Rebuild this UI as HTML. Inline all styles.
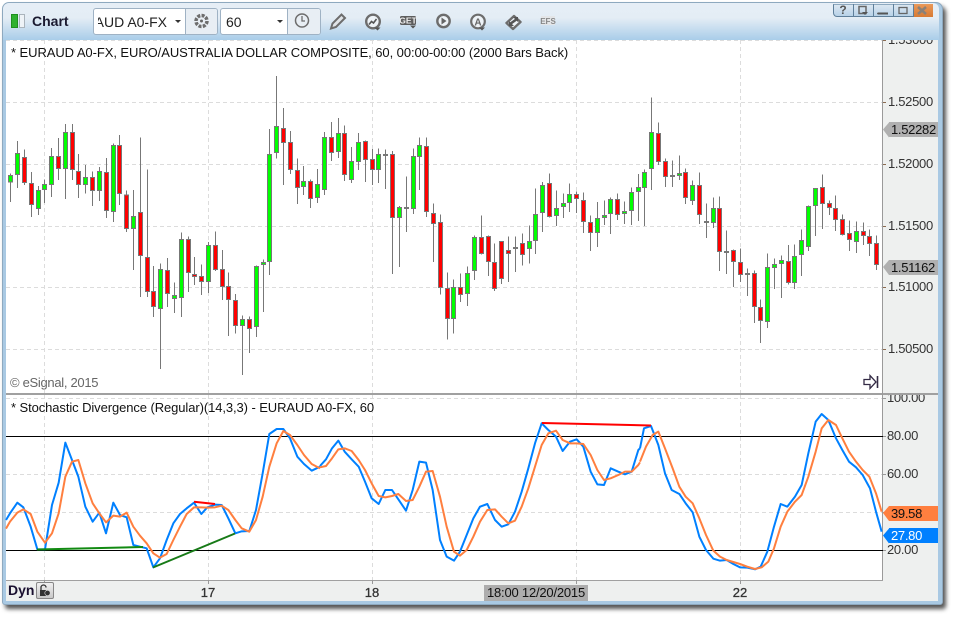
<!DOCTYPE html>
<html>
<head>
<meta charset="utf-8">
<style>
html,body{margin:0;padding:0;background:#fff}
body{width:957px;height:619px;overflow:hidden;position:relative;font-family:"Liberation Sans",sans-serif;font-size:13px;color:#111}
#win{position:absolute;left:2px;top:2px;width:939px;height:601px;border:1px solid #8ea9bf;border-radius:7px 7px 3px 3px;background:#a9c9e3;box-shadow:3px 4px 4px #555}
#bar{position:absolute;left:3px;top:3px;width:936px;height:37px;border-radius:6px 6px 0 0;background:linear-gradient(#e6eef6 0,#e4edf5 40%,#a9cde9 100%)}
#main{position:absolute;left:6px;top:40px;width:876px;height:540px;background:#fff}
#axis{position:absolute;left:883px;top:40px;width:55px;height:561px;background:#eef0ef}
#bot{position:absolute;left:6px;top:581px;width:877px;height:20px;background:#eef0ef}
.t{position:absolute;white-space:nowrap;line-height:14px}
.p{left:888px;color:#333;letter-spacing:-.3px}
.q{left:887px;color:#333;letter-spacing:-.3px}
.d{color:#333;top:586px;width:30px;text-align:center;-webkit-text-stroke:.3px #333}
.tag{position:absolute;left:889px;width:49px;height:15px;line-height:15px}
.tag span{position:absolute;left:2px;top:0;letter-spacing:-.3px}
.combo{position:absolute;top:8px;height:25px;background:#fff;border:1px solid #9fb2c4;border-radius:3px;overflow:hidden}
.combo .b{position:absolute;top:0;height:25px;background:#e8eef4;border-left:1px solid #9fb2c4}
.btn{position:absolute;top:4px;height:13px;width:19px;border-left:1px solid #5f7f9a;text-align:center;line-height:13px;font-weight:bold;font-size:12px;color:#555}
</style>
</head>
<body>
<div id="win"></div>
<div id="bar"></div>
<div id="main"></div>
<div id="axis"></div>
<div id="bot"></div>

<!-- toolbar left -->
<div style="position:absolute;left:11px;top:14px;width:5px;height:12px;background:#2fb12f;border:1px solid #1f8f1f"></div>
<div style="position:absolute;left:19px;top:14px;width:4px;height:12px;background:#eef3f7;border:1px solid #aab4bc"></div>
<div class="t" style="left:32px;top:14px;font-weight:bold;font-size:14px;color:#1a1a30">Chart</div>

<div class="combo" style="left:93px;width:123px">
  <div style="position:absolute;left:4px;top:0;width:71px;height:25px;overflow:hidden"><div style="position:absolute;right:2px;top:5px;font-size:14px;line-height:16px;color:#222;white-space:nowrap">EURAUD A0-FX</div></div>
  <div style="position:absolute;left:81px;top:11px;width:0;height:0;border:3px solid transparent;border-top:3px solid #333"></div>
  <div class="b" style="left:91px;width:31px"></div>
</div>
<div class="combo" style="left:220px;width:99px">
  <div style="position:absolute;left:5px;top:5px;font-size:14px;line-height:16px;color:#222">60</div>
  <div style="position:absolute;left:56px;top:11px;width:0;height:0;border:3px solid transparent;border-top:3px solid #333"></div>
  <div class="b" style="left:66px;width:32px"></div>
</div>

<!-- window buttons -->
<div style="position:absolute;left:833px;top:4px;width:100px;height:13px;border:1px solid #5f7f9a;border-top-color:#8ea9bf;border-radius:0 0 4px 4px;background:linear-gradient(#dbe7f1,#b8d2e8);overflow:hidden;box-sizing:border-box"></div>
<div class="btn" style="left:833px;border-left:0;width:20px;">?</div>
<div class="btn" style="left:853px"></div>
<div class="btn" style="left:873px"></div>
<div class="btn" style="left:893px"></div>
<div class="btn" style="left:913px;width:19px;background:linear-gradient(#e9995a,#d87a33)"></div>

<svg width="957" height="619" style="position:absolute;left:0;top:0" xmlns="http://www.w3.org/2000/svg">
  <!-- window button glyphs -->
  <path d="M860 7.500h7v7h-7zM882 14.500h-4" fill="none" stroke="#666" stroke-width="1.500" transform="translate(-1 -1)"/>
  <path d="M862 12l6 0-3 3z" fill="#555"/>
  <path d="M878 13.500h10" stroke="#555" stroke-width="2"/>
  <rect x="899" y="7.500" width="8" height="6" fill="none" stroke="#666" stroke-width="1.300"/>
  <path d="M918 7l8 7M926 7l-8 7" stroke="#8a8078" stroke-width="2.500"/>

  <!-- toolbar icons -->
  <g fill="none" stroke="#6d6d6d">
    <!-- gear -->
    <circle cx="201.500" cy="21" r="5.500" stroke-width="3.500" stroke-dasharray="3 1.300"/>
    <circle cx="201.500" cy="21" r="1.500" fill="#666" stroke="none"/>
    <!-- clock -->
    <circle cx="302" cy="20.500" r="6.500" stroke-width="1.500"/>
    <path d="M302 16v5h3" stroke-width="1.300"/>
    <!-- pencil -->
    <path d="M331 28.500l1.500-5 9-9 3.500 3.500-9 9z" fill="#e0e4e8" stroke-width="2"/>
    <!-- chart -->
    <circle cx="373" cy="21.500" r="6.800" fill="#eef3f7" stroke-width="2.400"/>
    <path d="M369 24.500l2.500-3 2 1.500 3-4" stroke="#555" stroke-width="1.600"/>
    <!-- play -->
    <circle cx="443.500" cy="21" r="6.200" fill="#eef3f7" stroke-width="2.400"/>
    <!-- A -->
    <circle cx="478" cy="21.500" r="6.800" fill="#eef3f7" stroke-width="2.200"/>
    <!-- diamond -->
    <path d="M506.500 23l7.500-7 6.500 6-7.500 7z" fill="#eef3f7" stroke-width="2.400" stroke-linejoin="round"/>
    <path d="M510 24l7-5" stroke="#555" stroke-width="2.600"/>
  </g>
  <path d="M441.500 17.500l5 3.500-5 3.500z" fill="#666"/>
  <path d="M513 17h5v5zM514 26h-5v-5z" fill="#555"/>
  <path d="M374.500 27.500h6l-3 3zM479 27.500h6l-3 3zM410 25.500h6l-3 3z" fill="#555"/>
  <rect x="400" y="16" width="16" height="9" rx="1.500" fill="#5d5d5d"/>
  <text x="408" y="23.500" font-family="Liberation Sans" font-size="8.500" font-weight="bold" fill="#eee" text-anchor="middle">GET</text>
  <text x="478" y="25.500" font-family="Liberation Sans" font-size="10" font-weight="bold" fill="#666" text-anchor="middle">A</text>
  <rect x="541" y="16" width="14" height="9" fill="#e4e6e8"/>
  <text x="548" y="24" font-family="Liberation Sans" font-size="8" font-weight="bold" fill="#888" text-anchor="middle">EFS</text>

  <!-- grid -->
  <g stroke="#dcdcdc" stroke-width="1" stroke-dasharray="4 3" shape-rendering="crispEdges" fill="none">
    <path d="M6 40.500H882M6 102.500H882M6 164.500H882M6 226.500H882M6 287.500H882M6 349.500H882"/>
    <path d="M44.500 40V393M208.500 40V393M372.500 40V393M576.500 40V393M740.500 40V393"/>
    <path d="M6 398.500H882M6 474.500H882M6 512.500H882"/>
    <path d="M44.500 395V580M208.500 395V580M372.500 395V580M576.500 395V580M740.500 395V580"/>
  </g>

  <!-- candles A -->
  <g transform="translate(.17 120.170) scale(.33333)" shape-rendering="crispEdges">
    <path fill="none" stroke="#777" stroke-width="3" d="M31 160V245M52 63V204M73 88V195M94 156V290M115 198V284M133 178V249M154 84V231M175 54V180M196 12V236M217 12V180M235 102V234M256 135V220M277 154V258M298 141V243M319 114V294M340 70V305M358 45V255M379 211V336M400 210V450M421 52V530M442 148V530M460 438V590M481 430V746M502 414V560M523 487V578M544 337V590M565 349V515M583 411V495M604 433V524M625 365V518M646 334V452M667 390V540M685 457V647M706 522V640M727 586V764M748 589V698M769 436V650M790 418V575M808 27V464M829 -132V115M850 -36V194"/>
    <path fill="#00ff00" stroke="#777" stroke-width="3" d="M25 166h12V185h-12zM46 100h12V163h-12zM109 211h12V265h-12zM127 193h12V208h-12zM148 109h12V193h-12zM190 37h12V145h-12zM250 172h12V193h-12zM292 154h12V211h-12zM334 76h12V274h-12zM394 289h12V325h-12zM475 448h12V565h-12zM517 526h12V535h-12zM538 358h12V532h-12zM619 376h12V484h-12zM721 598h12V616h-12zM763 439h12V619h-12zM784 427h12V433h-12zM802 103h12V424h-12zM823 19h12V97h-12z"/>
    <path fill="#ff0000" stroke="#777" stroke-width="3" d="M67 112h12V187h-12zM88 190h12V253h-12zM169 109h12V145h-12zM211 37h12V148h-12zM229 154h12V193h-12zM271 172h12V211h-12zM313 157h12V271h-12zM352 76h12V220h-12zM373 224h12V325h-12zM415 277h12V406h-12zM436 412h12V514h-12zM454 514h12V559h-12zM496 451h12V520h-12zM559 358h12V457h-12zM577 463h12V469h-12zM598 469h12V484h-12zM640 376h12V448h-12zM661 448h12V499h-12zM679 499h12V538h-12zM700 541h12V616h-12zM742 598h12V625h-12zM844 25h12V67h-12z"/>
  </g>
  <!-- candles B -->
  <g transform="translate(290.170 70.170) scale(.33333)" shape-rendering="crispEdges">
    <path fill="none" stroke="#777" stroke-width="3" d="M1 183V311M22 265V401M40 288V374M61 328V413M82 297V398M103 186V374M124 156V272M145 144V264M163 166V332M184 231V338M205 189V299M226 211V335M247 237V344M265 235V338M286 238V356M307 243V611M328 408V590M349 319V485M370 235V431M388 202V360M409 202V440M430 400V575M451 433V673M472 607V808M490 628V790M511 610V695M532 589V707M553 496V630M574 436V553M595 496V617M613 520V662M634 514V641M655 499V635M676 499V605M697 490V586M718 466V580M736 355V551M757 335V485M778 310V442M799 361V467M820 370V443M838 340V425M859 364V428M880 367V488"/>
    <path fill="#00ff00" stroke="#777" stroke-width="3" d="M34 334h12V349h-12zM76 343h12V382h-12zM97 202h12V358h-12zM139 190h12V244h-12zM178 274h12V328h-12zM199 217h12V274h-12zM259 253h12V298h-12zM322 412h12V442h-12zM364 259h12V415h-12zM382 226h12V259h-12zM484 652h12V745h-12zM526 610h12V670h-12zM547 502h12V601h-12zM712 514h12V535h-12zM730 433h12V511h-12zM751 346h12V427h-12zM793 415h12V436h-12zM814 400h12V409h-12zM832 373h12V397h-12zM280 253h12V256h-12zM343 412h12V415h-12zM670 532h12V535h-12z"/>
    <path fill="#ff0000" stroke="#777" stroke-width="3" d="M-5 217h12V298h-12zM16 301h12V352h-12zM55 334h12V385h-12zM118 202h12V247h-12zM157 190h12V313h-12zM220 214h12V268h-12zM241 268h12V298h-12zM301 253h12V442h-12zM403 229h12V424h-12zM424 430h12V460h-12zM445 457h12V652h-12zM466 655h12V745h-12zM505 652h12V673h-12zM568 502h12V550h-12zM589 499h12V574h-12zM607 577h12V655h-12zM628 514h12V625h-12zM649 541h12V550h-12zM691 520h12V553h-12zM772 340h12V439h-12zM853 373h12V385h-12zM874 391h12V454h-12z"/>
  </g>
  <!-- candles C -->
  <g transform="translate(590.170 90.170) scale(.33333)" shape-rendering="crispEdges">
    <path fill="none" stroke="#777" stroke-width="3" d="M1 376V482M22 336V470M43 331V404M61 322V431M82 310V389M103 334V401M124 292V404M145 252V392M163 238V408M184 22V299M205 97V224M226 205V290M247 211V290M268 196V269M286 235V341M307 271V344M328 247V401M349 340V443M370 322V413M388 319V542M409 421V551M430 478V590M451 475V575M472 535V617M493 541V698M511 628V758M532 490V713M553 505V596M574 496V623M595 465V583M613 463V596M634 418V557M655 346V482M676 295V437M697 253V416M718 331V374M736 316V422M757 373V436M778 391V482M799 394V488M820 397V464M838 418V497M859 436V539"/>
    <path fill="#00ff00" stroke="#777" stroke-width="3" d="M16 385h12V427h-12zM37 376h12V382h-12zM55 328h12V370h-12zM97 364h12V370h-12zM118 307h12V361h-12zM139 292h12V304h-12zM157 247h12V292h-12zM178 127h12V235h-12zM262 250h12V256h-12zM301 286h12V331h-12zM364 355h12V397h-12zM526 532h12V694h-12zM547 523h12V532h-12zM568 511h12V520h-12zM607 499h12V577h-12zM628 451h12V493h-12zM649 349h12V469h-12zM670 295h12V346h-12zM793 424h12V454h-12zM241 256h12V259h-12zM343 394h12V397h-12zM403 484h12V487h-12zM466 550h12V553h-12z"/>
    <path fill="#ff0000" stroke="#777" stroke-width="3" d="M-5 397h12V427h-12zM76 328h12V373h-12zM199 130h12V214h-12zM220 214h12V259h-12zM280 247h12V322h-12zM322 286h12V373h-12zM382 355h12V484h-12zM424 481h12V514h-12zM445 517h12V553h-12zM487 550h12V649h-12zM505 652h12V691h-12zM589 514h12V577h-12zM691 292h12V340h-12zM712 340h12V352h-12zM730 355h12V388h-12zM751 388h12V433h-12zM772 430h12V448h-12zM814 424h12V436h-12zM832 439h12V460h-12zM853 460h12V523h-12z"/>
  </g>

  <!-- separators & axes -->
  <g shape-rendering="crispEdges">
    <rect x="6" y="393" width="932" height="2" fill="#a0a0a0"/>
    <rect x="882" y="40" width="1" height="541" fill="#9a9a9a"/>
    <rect x="6" y="580" width="877" height="1" fill="#a0a0a0"/>
    <path d="M6 436.500H883M6 550.500H883" stroke="#000" stroke-width="1"/>
    <path d="M44.500 580v4M208.500 580v4M372.500 580v4M576.500 580v4M740.500 580v4" stroke="#999"/>
    <path d="M883 40.500h3M883 102.500h3M883 164.500h3M883 226.500h3M883 287.500h3M883 349.500h3" stroke="#8a6a50"/>
    <path d="M883 398.500h3M883 436.500h3M883 474.500h3M883 512.500h3M883 550.500h3" stroke="#999"/>
  </g>

  <!-- exit arrow -->
  <path d="M864 379.500h6v-4l6 6.500-6 6.500v-4h-6z" fill="#fff" stroke="#332a44" stroke-width="1.300"/>
  <path d="M877.500 376v12" stroke="#332a44" stroke-width="1.600" fill="none"/>

  <!-- stochastic lines -->
  <g fill="none" stroke-width="6" stroke-linejoin="round">
    <g transform="translate(0 370) scale(.33333)">
      <polyline stroke="#0080ff" points="18,450 30,430 52,398 70,412 92,470 112,538 135,538 156,405 176,338 196,218 216,270 235,320 256,410 278,455 298,428 318,490 340,398 360,435 380,442 400,525 420,530 440,535 460,592 480,565 500,510 520,460 540,432 560,415 582,398 604,432 622,412 645,404 665,405 685,445 706,490 725,484 748,483 768,420 788,310 808,192 830,177 850,177 870,205 892,260 912,282 935,302 960,290"/>
      <polyline stroke="#ff7f3f" points="18,476 30,455 52,428 70,418 92,432 112,485 135,518 156,490 176,430 196,320 216,275 235,270 256,340 278,400 298,430 318,457 340,437 360,440 380,428 400,470 420,497 440,520 460,550 480,563 500,552 520,510 540,470 560,432 582,412 604,412 622,413 645,412 665,407 685,420 706,450 725,475 748,485 768,450 788,380 808,290 830,220 850,183 870,195 892,225 912,255 935,282 960,295"/>
    </g>
    <g transform="translate(320 390) scale(.33333)">
      <polyline stroke="#0080ff" points="0,228 18,208 36,175 55,152 74,185 95,208 116,230 135,275 155,325 176,342 196,300 216,300 235,328 258,362 278,300 298,215 318,218 338,300 360,450 380,500 402,512 420,485 440,435 460,385 480,350 502,342 525,390 545,410 565,403 585,365 605,305 625,235 645,160 665,100 685,120 708,140 728,183 750,155 770,148 790,170 812,245 832,283 852,285 872,235 895,245 915,253 935,245 955,180 960,175"/>
      <polyline stroke="#ff7f3f" points="0,232 18,228 36,205 55,178 74,175 95,183 116,210 135,240 155,280 176,318 196,322 216,318 235,312 258,333 278,330 298,290 318,245 338,243 360,320 380,410 402,485 420,497 440,480 460,440 480,395 502,360 525,358 545,380 565,400 585,392 605,350 625,295 645,230 665,165 685,130 708,122 728,150 750,160 770,160 790,162 812,195 832,240 852,270 872,265 895,255 915,245 935,245 955,225 960,217"/>
    </g>
    <g transform="translate(640 380) scale(.33333)">
      <polyline stroke="#0080ff" points="0,205 12,145 33,138 55,195 75,280 95,330 118,342 137,370 158,397 178,470 198,510 220,536 240,542 260,540 280,552 300,562 322,563 345,568 362,560 382,515 402,440 422,372 442,380 465,350 485,315 505,220 527,125 545,102 565,120 588,175 607,210 627,245 648,262 668,285 690,325 708,395 725,455"/>
      <polyline stroke="#ff7f3f" points="0,245 18,200 38,165 55,155 75,205 98,265 118,320 137,350 158,370 178,415 198,465 220,512 240,530 260,540 280,546 300,552 322,560 345,567 365,562 385,545 402,505 422,440 442,395 465,365 485,345 505,290 527,215 545,145 565,120 588,135 607,175 627,215 648,245 668,270 688,290 708,340 725,395"/>
    </g>
  </g>
  <!-- divergence lines -->
  <g fill="none" stroke-width="2">
    <path d="M37 549.500L143 547" stroke="#128a12"/>
    <path d="M153 567.500L235 533.500" stroke="#177a17"/>
    <path d="M194 501.700L215 504" stroke="#ff0000"/>
    <path d="M542 423L651 425.500" stroke="#ff0000"/>
  </g>
  <!-- tag arrows -->
  <path d="M883 129.500l6-7v15z" fill="#b0b0b0"/>
  <path d="M883 267l6-7v15z" fill="#b0b0b0"/>
  <path d="M883 513l6-7v15z" fill="#ff7f3f"/>
  <path d="M883 535.500l6-7v15z" fill="#0080ff"/>
</svg>

<!-- text -->
<div class="t" style="left:11px;top:46px;letter-spacing:-.07px">* EURAUD A0-FX, EURO/AUSTRALIA DOLLAR COMPOSITE, 60, 00:00-00:00 (2000 Bars Back)</div>
<div class="t" style="left:10px;top:376px;color:#666;letter-spacing:-.3px">© eSignal, 2015</div>
<div class="t" style="left:11px;top:401px;letter-spacing:-.09px">* Stochastic Divergence (Regular)(14,3,3) - EURAUD A0-FX, 60</div>

<div style="position:absolute;left:884px;top:40px;width:54px;height:8px;overflow:hidden"><div class="t" style="left:4px;top:-7px;color:#333;letter-spacing:-.3px">1.53000</div></div>
<div class="t p" style="top:95px">1.52500</div>
<div class="t p" style="top:157px">1.52000</div>
<div class="t p" style="top:219px">1.51500</div>
<div class="t p" style="top:280px">1.51000</div>
<div class="t p" style="top:342px">1.50500</div>
<div class="tag" style="top:122px;background:#b0b0b0"><span>1.52282</span></div>
<div class="tag" style="top:260px;background:#b0b0b0"><span>1.51162</span></div>

<div style="position:absolute;left:884px;top:395px;width:54px;height:12px;overflow:hidden"><div class="t" style="left:3px;top:-4px;color:#333;letter-spacing:-.3px">100.00</div></div>
<div class="t q" style="top:429px">80.00</div>
<div class="t q" style="top:467px">60.00</div>
<div class="t q" style="top:543px">20.00</div>
<div class="tag" style="top:506px;background:#ff7f3f;color:#111"><span>39.58</span></div>
<div class="tag" style="top:528px;background:#0080ff;color:#fff"><span>27.80</span></div>

<div class="t" style="left:8px;top:583px;font-weight:bold;font-size:14px;color:#1a1030">Dyn</div>
<div style="position:absolute;left:36px;top:582px;width:16px;height:15px;border:1px solid #888;border-radius:2px;background:linear-gradient(#f0f0f0,#c8c8c8)"></div>
<svg width="16" height="15" style="position:absolute;left:37px;top:583px" xmlns="http://www.w3.org/2000/svg"><path d="M4 7V4.500a2.500 2.500 0 0 1 5 0" fill="none" stroke="#333" stroke-width="1.300"/><rect x="3" y="7" width="6" height="6" fill="#333"/><circle cx="10.500" cy="10" r="2.700" fill="#333" stroke="#ddd" stroke-width=".6"/></svg>

<div class="t d" style="left:193px">17</div>
<div class="t d" style="left:357px">18</div>
<div class="t d" style="left:725px">22</div>
<div class="t" style="left:484px;top:585px;width:104px;height:16px;line-height:16px;background:#adadad;text-align:center;color:#111;letter-spacing:-.2px">18:00 12/20/2015</div>
</body>
</html>
